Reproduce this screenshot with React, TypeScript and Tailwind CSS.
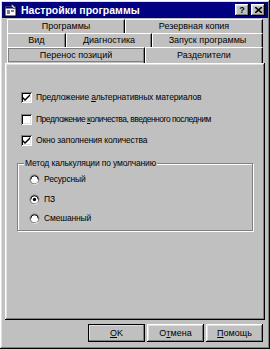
import React from "react";

const font = { fontFamily: '"Liberation Sans", Arial, sans-serif' };

const raised =
  "shadow-[inset_-1px_-1px_#000,inset_1px_1px_#fff,inset_-2px_-2px_#808080,inset_2px_2px_#dfdfdf]";
const sunken =
  "shadow-[inset_1px_1px_#808080,inset_-1px_-1px_#fff,inset_2px_2px_#000,inset_-2px_-2px_#dfdfdf]";

function Tab({ label, w, active }: { label: string; w: string; active?: boolean }) {
  return (
    <div
      className={`${w} h-full flex items-center justify-center border-t border-l border-white shadow-[inset_-1px_0_#808080] border-r border-r-black ${
        active ? "outline outline-1 -outline-offset-2 outline-[#808080]" : ""
      }`}
    >
      <span className="text-[9px] text-black leading-none">{label}</span>
    </div>
  );
}

function Check({
  checked,
  label,
  u,
  tight,
}: {
  checked?: boolean;
  label: [string, string, string];
  u?: boolean;
  tight?: boolean;
}) {
  return (
    <div className="flex items-center h-[11px]">
      <div className={`w-[11px] h-[11px] bg-white ${sunken} relative`}>
        {checked && (
          <svg width="7" height="7" viewBox="0 0 7 7" className="absolute left-[2px] top-[2px]">
            <path d="M0 3 L2 5 L7 0 L7 2 L2 7 L0 5 Z" fill="#000" />
          </svg>
        )}
      </div>
      <span
        className={`ml-[4px] text-[8.5px] leading-none text-black ${
          tight ? "tracking-[-0.5px]" : "tracking-[-0.15px]"
        }`}
      >
        {label[0]}
        {u ? <span className="underline">{label[1]}</span> : label[1]}
        {label[2]}
      </span>
    </div>
  );
}

function Radio({ checked, label }: { checked?: boolean; label: string }) {
  return (
    <div className="flex items-center h-[11px]">
      <svg width="11" height="11" viewBox="0 0 12 12">
        <circle cx="6" cy="6" r="5.5" fill="#808080" />
        <path d="M1.2 8.5 A5.2 5.2 0 0 0 10.8 8.5 A5.2 5.2 0 0 0 10.8 3.5 L11 3.5 A5.8 5.8 0 0 1 1 9 Z" fill="#fff" />
        <circle cx="6" cy="6" r="4" fill="#fff" />
        <path d="M2 6 A4 4 0 0 1 10 6" stroke="#000" strokeWidth="1" fill="none" />
        {checked && <circle cx="6" cy="6" r="1.8" fill="#000" />}
      </svg>
      <span className="ml-[4px] text-[8.5px] tracking-[-0.15px] leading-none text-black">{label}</span>
    </div>
  );
}

function Button({ children, def }: { children: React.ReactNode; def?: boolean }) {
  return (
    <div
      className={`w-[57px] h-[18px] flex items-center justify-center bg-[#c0c0c0] ${raised} ${
        def ? "outline outline-1 outline-black -outline-offset-1" : ""
      }`}
    >
      <span className="text-[9px] leading-none text-black">{children}</span>
    </div>
  );
}

export default function App() {
  return (
    <div style={font} className={`w-[270px] h-[349px] bg-[#c0c0c0] ${raised} flex flex-col overflow-hidden`}>
      <div className="mx-[2px] mt-[2px] h-[16px] bg-[#000080] flex items-center pl-[2px] pr-[3px]">
        <svg width="13" height="13" viewBox="0 0 13 13">
          <rect x="1" y="2" width="11" height="10" fill="#fff" stroke="#000" strokeWidth="1" />
          <rect x="1.5" y="2.5" width="10" height="2" fill="#000080" />
          <rect x="3" y="6" width="3" height="4" fill="#808080" />
          <rect x="7" y="6" width="3" height="2" fill="#808080" />
          <path d="M8 0 L12 4 L10 5 L7 2 Z" fill="#c0c0c0" stroke="#000" strokeWidth="0.5" />
        </svg>
        <span className="ml-[4px] text-white font-bold text-[10.5px] leading-none">Настройки программы</span>
        <div className="ml-auto flex items-center">
          <div className={`w-[14px] h-[12px] bg-[#c0c0c0] ${raised} flex items-center justify-center`}>
            <span className="text-[9px] font-bold leading-none text-black">?</span>
          </div>
          <div className={`ml-[2px] w-[14px] h-[12px] bg-[#c0c0c0] ${raised} flex items-center justify-center`}>
            <svg width="7" height="6" viewBox="0 0 7 6">
              <path d="M0 0 L7 6 M7 0 L0 6" stroke="#000" strokeWidth="1.6" />
            </svg>
          </div>
        </div>
      </div>

      <div className="mt-[1px] ml-[7px] w-[256px] flex flex-col">
        <div className="h-[14px] flex">
          <Tab label="Программы" w="w-[118px]" />
          <Tab label="Резервная копия" w="w-[138px]" />
        </div>
        <div className="h-[14px] flex">
          <Tab label="Вид" w="w-[59px]" />
          <Tab label="Диагностика" w="w-[86px]" />
          <Tab label="Запуск программы" w="w-[111px]" />
        </div>
        <div className="h-[16px] flex">
          <Tab label="Перенос позиций" w="w-[138px]" active />
          <Tab label="Разделители" w="w-[118px]" />
        </div>
      </div>

      <div className={`ml-[5px] w-[260px] h-[257px] ${raised} pl-[16px] pt-[29px] flex flex-col`}>
        <div className="flex flex-col gap-[10.5px]">
          <Check checked label={["Предложение ", "а", "льтернативных материалов"]} u />
          <Check tight label={["Предложение ", "к", "оличества, введенного последним"]} u />
          <Check checked label={["Окно заполнения количества", "", ""]} />
        </div>
        <div className="relative mt-[17px] ml-[-4px] w-[236px] h-[68px] border border-[#808080] shadow-[inset_1px_1px_#fff,1px_1px_#fff]">
          <span className="absolute left-[6px] top-[-5px] bg-[#c0c0c0] px-[1px] text-[8.5px] tracking-[-0.15px] leading-none text-black">
            Метод калькуляции по умолчанию
          </span>
          <div className="pl-[11px] pt-[10px] flex flex-col gap-[8.5px]">
            <Radio label="Ресурсный" />
            <Radio checked label="ПЗ" />
            <Radio label="Смешанный" />
          </div>
        </div>
      </div>

      <div className="mt-[4px] ml-[88px] flex gap-[2px]">
        <Button def>
          <span className="underline">O</span>K
        </Button>
        <Button>
          О<span className="underline">т</span>мена
        </Button>
        <Button>
          <span className="underline">П</span>омощь
        </Button>
      </div>
    </div>
  );
}
